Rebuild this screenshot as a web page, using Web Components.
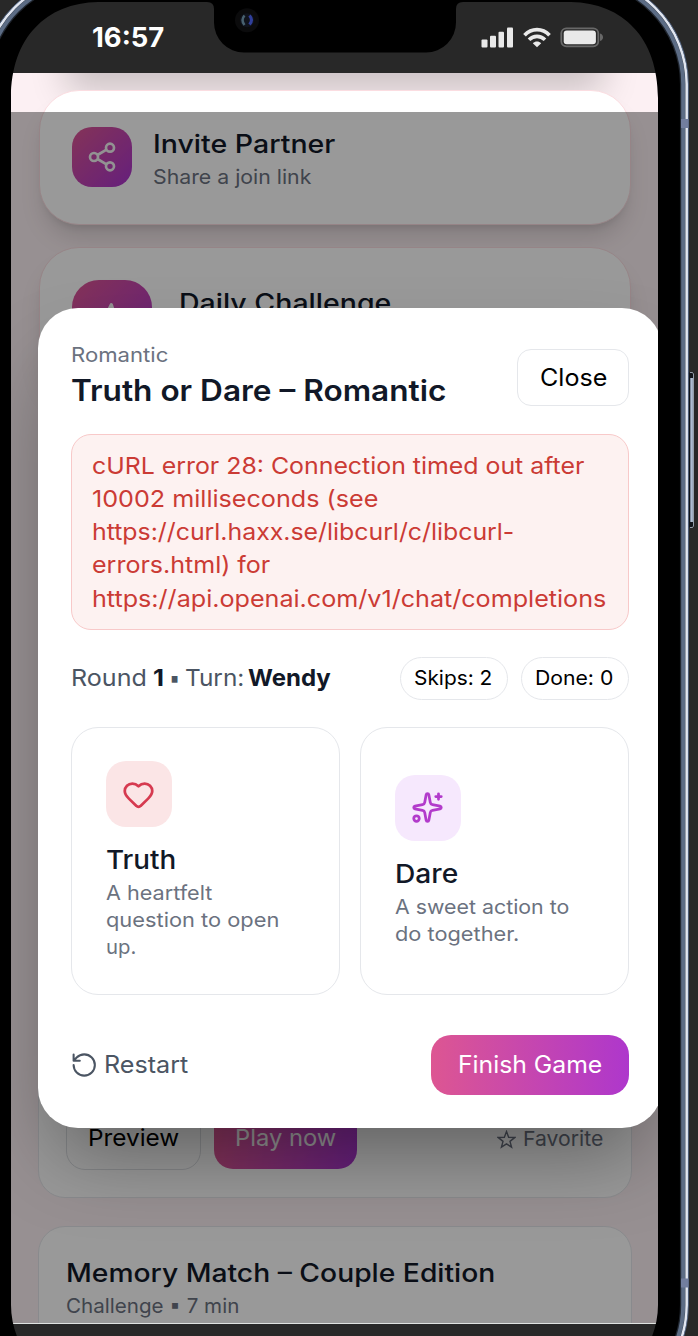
<!DOCTYPE html>
<html lang="en">
<head>
<meta charset="utf-8">
<title>Truth or Dare</title>
<style>
html,body{margin:0;padding:0;background:#282828;overflow:hidden}
body{width:698px;height:1336px;font-family:Inter,"Liberation Sans",sans-serif;color:#111827}
</style>
</head>
<body>
<phone-frame>
  <status-bar slot="status"></status-bar>
  <games-page slot="page"></games-page>
  <game-dialog slot="dialog"></game-dialog>
</phone-frame>
<script>
class Base extends HTMLElement{
  constructor(){super();this.attachShadow({mode:'open'}).innerHTML=this.constructor.html;}
}
/* One line of text, widened so that it fills the width in its "w" attribute. */
customElements.define('fit-text',class extends Base{
  static html='<style>:host{display:inline-block;white-space:nowrap}span{display:inline-block;transform-origin:0 50%}</style><span><slot></slot></span>';
  connectedCallback(){
    const w=+this.getAttribute('w');
    this.style.width=w+'px';
    const span=this.shadowRoot.querySelector('span');
    span.style.transform='scaleX('+((w-.7)/span.getBoundingClientRect().width).toFixed(4)+')';
  }
});
customElements.define('icon-tile',class extends Base{
  static html='<style>:host{display:flex;align-items:center;justify-content:center;flex:none;width:var(--s,60px);height:var(--s,60px);border-radius:var(--r,20px);background:var(--bg,linear-gradient(135deg,#dd5692,#a934cf));color:#fff}</style><slot></slot>';
});
customElements.define('link-card',class extends Base{
  static html=`<style>
  :host{display:flex;box-sizing:border-box;width:592px;height:135px;border:1.500px solid #fbdde1;border-radius:40px;background:#fff;padding:36px 32.500px;gap:20.500px;box-shadow:0 17px 25px -5px #0002,0 7px 10px -6px #0002}
  .t{display:flex;flex-direction:column;white-space:nowrap}
  .a{font-size:25.500px;line-height:33px;font-weight:530;color:#111827}
  .b{font-size:20.300px;line-height:33px;color:#6b7280}
  </style><slot name="icon"></slot><div class="t"><div class="a"><slot name="title"></slot></div><div class="b"><slot name="sub"></slot></div></div>`;
});
customElements.define('game-card',class extends Base{
  static html='<style>:host{display:block;box-sizing:border-box;width:593.500px;border:1.500px solid #e5e7eb;border-radius:27px;background:#fff;padding:27px}</style><slot></slot>';
});
customElements.define('status-bar',class extends Base{
  static html=`<style>
  :host{display:flex;height:73px;box-sizing:border-box;background:#282828;padding:20px 54.500px 18px 80.500px;justify-content:space-between;align-items:center;color:#fff}
  .time{font-size:26.500px;font-weight:650;line-height:35px}
  .i{display:flex;gap:9px;align-items:center;height:22px}
  svg{display:block}
  </style><fit-text class="time" w="73">16:57</fit-text>
  <div class="i">
  <svg width="33" height="21" viewBox="0 0 33 21" fill="#e9e9e9"><rect x=".5" y="12.500" width="6" height="8" rx="1"/><rect x="9" y="8.700" width="6" height="11.800" rx="1"/><rect x="17.500" y="4.700" width="5.500" height="15.800" rx="1"/><rect x="26" y=".5" width="6" height="20" rx="1"/></svg>
  <svg width="28" height="21" viewBox="0 0 28 21" fill="none" stroke="#e9e9e9" stroke-width="3.700"><path d="M1.500 8.200C8.500.8 19.500.8 26.500 8.200M6 12.800c4.700-4.600 11.300-4.600 16 0"/><path d="M9.800 16.300c2.500-2.300 5.900-2.300 8.400 0L14 20.300z" fill="#e9e9e9" stroke="none"/></svg>
  <svg width="44" height="21" viewBox="0 0 44 21"><rect x="1.300" y="1.300" width="37" height="18" rx="5" fill="none" stroke="#686868" stroke-width="1.800"/><rect x="3.700" y="3.500" width="32.200" height="13.700" rx="3" fill="#e9e9e9"/><path d="M40 6.500q3 1 3 3.800t-3 3.700z" fill="#686868"/></svg>
  </div>`;
});
customElements.define('games-page',class extends Base{
  static html=`<style>
  :host{display:flex;flex-direction:column;box-sizing:border-box;height:1250px;overflow:hidden;background:#fcf0f3;padding:17px 0 0 27.500px;position:relative}
  :host::before{content:"";position:absolute;left:65px;right:65px;top:-40px;height:40px;box-shadow:0 8px 36px 10px #0003}
  :host::after{content:"";position:absolute;left:0;right:0;top:39px;bottom:0;background:rgba(0,0,0,.4)}
  link-card{position:relative;flex:none}
  .daily{margin-top:21.500px;height:147px}
  .play{margin-top:562.500px;margin-left:-.5px;flex:none;height:242px;display:flex;align-items:flex-end;gap:13px}
  .btn{box-sizing:border-box;height:60px;border:1.500px solid #dddfe3;border-radius:19px;padding:0 20.500px;font-size:23.500px;line-height:54px;color:#000}
  .go{background:linear-gradient(100deg,#dd5692,#a934cf);border:0;color:#f4f4f4;margin-bottom:1px;line-height:58px}
  .fav{margin-left:auto;display:flex;align-items:center;gap:7px;color:#6b7280;font-size:20.500px;line-height:60px;height:62px}
  .mem{margin-top:27.500px;margin-left:-.5px;height:240px;flex:none}
  .mt{font-size:25.500px;line-height:38px;font-weight:530}.ms{font-size:20.300px;line-height:28px;color:#6b7280}
  </style>
  <link-card><icon-tile slot="icon"><svg width="32" height="32" viewBox="0 0 24 24" fill="none" stroke="#f4f4f4" stroke-width="2"><circle cx="18" cy="5" r="3"/><circle cx="6" cy="12" r="3"/><circle cx="18" cy="19" r="3"/><path d="m8.600 13.500 6.800 4M15.400 6.500l-6.800 4"/></svg></icon-tile>
  <fit-text slot="title" w="183">Invite Partner</fit-text><fit-text slot="sub" w="159">Share a join link</fit-text></link-card>
  <link-card class="daily" style="gap:27px;padding-top:32px"><icon-tile slot="icon" style="--s:80px;--r:27px"><svg width="40" height="40" viewBox="0 0 24 24" fill="#f4f4f4" stroke="#f4f4f4" stroke-width="2" stroke-linejoin="round"><path d="M11.600 2.800l2 6.700 8 2.500-8 2.500-2.500 8-2.500-8-6-2.500 6-3z"/></svg></icon-tile>
  <fit-text slot="title" w="213" style="line-height:46px">Daily Challenge</fit-text></link-card>
  <game-card class="play"><div class="btn"><fit-text w="92">Preview</fit-text></div><div class="btn go"><fit-text w="102">Play now</fit-text></div>
  <div class="fav"><svg width="19" height="19" viewBox="0 0 24 24" fill="none" stroke="#6b7280" stroke-width="1.800"><path d="M12 2l2.700 7.200 7.700.300-6 4.800 2 7.400L12 17.500l-6.400 4.200 2-7.400-6-4.800 7.700-.3z"/></svg><fit-text w="81">Favorite</fit-text></div></game-card>
  <game-card class="mem"><div class="mt"><fit-text w="430">Memory Match – Couple Edition</fit-text></div><div class="ms"><fit-text w="174">Challenge ▪ 7 min</fit-text></div></game-card>`;
});
customElements.define('choice-card',class extends Base{
  static html=`<style>
  :host{display:flex;flex-direction:column;justify-content:center;box-sizing:border-box;height:268px;border:1.500px solid #e5e7eb;border-radius:27px;padding:1px 33.500px 0}
  .t{margin-top:13px;font-size:26px;font-weight:530;line-height:40px;color:#111827}
  .d{display:flex;flex-direction:column;font-size:20.300px;line-height:26.700px;color:#6b7280}
  </style><slot name="icon"></slot><div class="t"><slot name="title"></slot></div><div class="d"><slot></slot></div>`;
});
customElements.define('error-box',class extends Base{
  static html='<style>:host{display:flex;flex-direction:column;box-sizing:border-box;height:195.500px;border:1.500px solid #f8c9c9;border-radius:20px;background:#fdf2f1;color:#cb3b35;padding:13.500px 20px 12px;font-size:23.300px;line-height:33.300px}</style><slot></slot>';
});
customElements.define('game-dialog',class extends Base{
  static html=`<style>
  :host{display:flex;flex-direction:column;box-sizing:border-box;width:624.500px;height:820px;border-radius:40px;background:#fff;padding:32px 33.500px;box-shadow:0 41px 83px -20px #0006}
  header,.row,footer{display:flex;justify-content:space-between;align-items:center}
  header{height:74px;margin-bottom:20px}
  .k{font-size:20.300px;line-height:27px;color:#6b7280}
  .h{font-size:29.300px;line-height:46px;font-weight:600}
  .k fit-text,.h fit-text{display:block}
  .close{box-sizing:border-box;width:111.500px;height:57px;border:1.500px solid #e5e7eb;border-radius:14px;padding-left:21.500px;line-height:55px;font-size:24px;color:#000}
  .row{height:43px;margin:27px 0}
  .turn{display:flex;align-items:center;font-size:23.500px;color:#4b5563;line-height:42px}
  .turn b{color:#111827}
  .pills{display:flex;gap:13px}
  .pill{box-sizing:border-box;width:108px;height:43px;border:1.500px solid #e5e7eb;border-radius:22px;padding-left:13.500px;line-height:40px;font-size:20.300px;color:#000}
  .grid{display:grid;grid-template-columns:1fr 1fr;gap:20.500px}
  footer{margin-top:40px;height:60px;font-size:24px}
  .re{display:flex;align-items:center;gap:6.500px;color:#4b5563;padding-left:.5px;line-height:57px;height:59px}
  .fin{width:197.500px;height:60px;box-sizing:border-box;border-radius:20px;padding-left:26.500px;line-height:60px;color:#fff;background:linear-gradient(90deg,#dd5692,#ae37cc)}
  svg{display:block}
  </style>
  <header><div><div class="k"><fit-text w="98">Romantic</fit-text></div><div class="h"><fit-text w="376">Truth or Dare – Romantic</fit-text></div></div><div class="close"><fit-text w="68">Close</fit-text></div></header>
  <error-box><fit-text w="493">cURL error 28: Connection timed out after</fit-text><fit-text w="287">10002 milliseconds (see</fit-text><fit-text w="423">https://curl.haxx.se/libcurl/c/libcurl-</fit-text><fit-text w="179">errors.html) for</fit-text><fit-text w="515">https://api.openai.com/v1/chat/completions</fit-text></error-box>
  <div class="row"><div class="turn"><fit-text w="76.500" style="margin-right:5.500px">Round</fit-text><b><fit-text w="11.700">1</fit-text></b><fit-text w="12" style="margin:0 4.500px 0 4px">▪</fit-text><fit-text w="60" style="margin-right:3px">Turn:</fit-text><b><fit-text w="83.500">Wendy</fit-text></b></div>
  <div class="pills"><div class="pill"><fit-text w="79">Skips: 2</fit-text></div><div class="pill"><fit-text w="79">Done: 0</fit-text></div></div></div>
  <div class="grid">
  <choice-card><icon-tile slot="icon" style="--s:66px;--bg:#fbe5e6"><svg width="33" height="33" viewBox="0 -1 24 24" fill="none" stroke="#d63a50" stroke-width="2" stroke-linecap="round" stroke-linejoin="round"><path d="M19 14c1.490-1.460 3-3.210 3-5.500A5.500 5.500 0 0 0 16.500 3c-1.760 0-3 .5-4.500 2-1.500-1.500-2.740-2-4.500-2A5.500 5.500 0 0 0 2 8.500c0 2.300 1.500 4.050 3 5.500l5.500 5.300a2 2 0 0 0 3 0z"/></svg></icon-tile>
  <fit-text slot="title" w="71">Truth</fit-text><fit-text w="107">A heartfelt</fit-text><fit-text w="174">question to open</fit-text><fit-text w="31">up.</fit-text></choice-card>
  <choice-card><icon-tile slot="icon" style="--s:66px;--bg:#f6e8fd"><svg width="33" height="33" viewBox="0 0 24 24" fill="none" stroke="#b23bcb" stroke-width="2" stroke-linecap="round" stroke-linejoin="round"><path d="M11.017 2.814a1 1 0 0 1 1.966 0l1.051 5.558a2 2 0 0 0 1.594 1.594l5.558 1.051a1 1 0 0 1 0 1.966l-5.558 1.051a2 2 0 0 0-1.594 1.594l-1.051 5.558a1 1 0 0 1-1.966 0l-1.051-5.558a2 2 0 0 0-1.594-1.594l-5.558-1.051a1 1 0 0 1 0-1.966l5.558-1.051a2 2 0 0 0 1.594-1.594zM20 2v4M22 4h-4"/><circle cx="4" cy="20" r="2"/></svg></icon-tile>
  <fit-text slot="title" w="64">Dare</fit-text><fit-text w="175">A sweet action to</fit-text><fit-text w="125">do together.</fit-text></choice-card>
  </div>
  <footer><div class="re"><svg width="26" height="30" viewBox="1.500 -1.500 24 27" fill="none" stroke="#4b5563" stroke-width="1.900" stroke-linecap="round" stroke-linejoin="round"><path d="M3 12a9.800 9.800 0 1 0 9.800-9.800 10.200 10.200 0 0 0-7 2.900L3 8M3 2.300V8h5.700"/></svg><fit-text w="85">Restart</fit-text></div><div class="fin"><fit-text w="145">Finish Game</fit-text></div></footer>`;
});
customElements.define('phone-frame',class extends Base{
  static html=`<style>
  :host{display:block;position:relative;width:698px;height:1336px;overflow:hidden;background:#282828}
  .screen{position:relative;width:647px;height:1336px;margin-left:11px;overflow:hidden;display:flex;flex-direction:column}
  .line{height:1px;background:#dfe3e1;flex:none}
  .over{position:absolute;left:26.500px;top:308px}
  svg{position:absolute;left:0;top:0}
  </style>
  <div class="screen"><slot name="status"></slot><slot name="page"></slot><div class="line"></div><div class="over"><slot name="dialog"></slot></div></div>
  <svg width="698" height="1336" viewBox="0 0 698 1336">
  <path fill="#282828" fill-rule="evenodd" d="M-40-40H740V1500H-40zM91-26H578.700a110 110 0 0 1 110 110V1305a110 110 0 0 1-110 110H91a110 110 0 0 1-110-110V84A110 110 0 0 1 91-26z"/>
  <path fill="#000" fill-rule="evenodd" d="M91-26H578.700a110 110 0 0 1 110 110V1305a110 110 0 0 1-110 110H91a110 110 0 0 1-110-110V84A110 110 0 0 1 91-26zM98 2C46 3 11 38 11 98V1305a85 85 0 0 0 85 85H573a85 85 0 0 0 85-85V98C658 38 623 3 571 2H463q-7 0-7 7V22.500a30 30 0 0 1-30 30H244a30 30 0 0 1-30-30V9q0-7-7-7z"/>
  <g fill="none">
  <rect x="-14.500" y="-21.500" width="698.700" height="1432" rx="105.500" stroke="#20262f" stroke-width="8.500"/>
  <rect x="-13.500" y="-20.500" width="696.700" height="1430" rx="104.500" stroke="#5c6c85" stroke-width="4"/>
  <rect x="-17" y="-24" width="703.700" height="1437" rx="108" stroke="#e1e6f1" stroke-width="2.600"/>
  <rect x="-18.700" y="-25.700" width="707.100" height="1440.400" rx="109.700" stroke="#64789a" stroke-width=".8"/>
  </g>
  <path d="M681 119h7.500v9H681zM681 1278.500h7.500v9H681z" fill="#727e9e"/>
  <rect x="689" y="372" width="4.500" height="155.500" rx="1.500" fill="#10141a"/><rect x="690.300" y="378" width="2.600" height="144" fill="#aebdd3"/><path d="M690 372.500h2.500l1 1.500v152l-1 1.500H690" fill="none" stroke="#c9d4e4" stroke-width=".7"/>
  <circle cx="247" cy="20.300" r="12" fill="#0b0b0c"/><circle cx="247" cy="20.300" r="7" fill="#10131c"/><path d="M244.500 15.500q-4 4.500 0 9.500" stroke="#48616f" stroke-width="2.500" fill="none"/><path d="M249.500 15.500q4 4.500 0 9" stroke="#303f9b" stroke-width="3" fill="none"/>
  </svg>`;
});
</script>
</body>
</html>
